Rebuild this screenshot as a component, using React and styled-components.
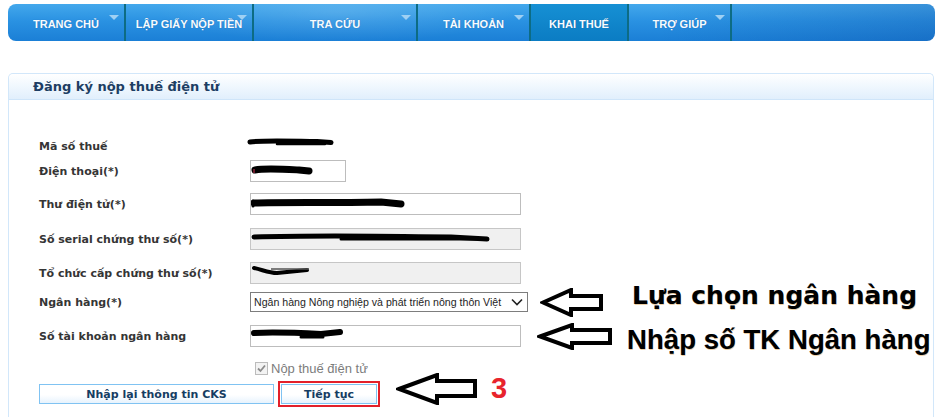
import React from 'react';
import styled, { createGlobalStyle } from 'styled-components';

const Global = createGlobalStyle`
  html, body { margin: 0; padding: 0; background: #fff; }
  body { font-family: "DejaVu Sans", Verdana, sans-serif; }
`

const Page = styled.div`
  width: 942px;
  height: 417px;
  overflow: hidden;
  padding-top: 4px;
  box-sizing: border-box;
`

const NavBar = styled.nav`
  display: flex;
  height: 37px;
  margin: 0 7px 0 8px;
  border-radius: 8px;
  overflow: hidden;
  background:
    radial-gradient(ellipse 180px 30px at 330px 8px, rgba(255,255,255,0.14), transparent),
    linear-gradient(90deg, rgba(255,255,255,0) 70%, rgba(0,30,120,0.16) 100%),
    linear-gradient(180deg, #43a8ec 0%, #2a92e2 45%, #1b7fd6 100%);
`

const NavItem = styled.div`
  position: relative;
  box-sizing: border-box;
  width: ${({ $w }) => $w}px;
  display: flex;
  align-items: center;
  justify-content: center;
  padding-top: 2px;
  border-right: 2px solid #0d6c84;
  color: #f7fbff;
  font: bold 11px "Liberation Sans", Arial, sans-serif;
  white-space: nowrap;
  text-shadow: 0 0 1px rgba(0, 40, 90, 0.35);
  background: ${({ $active }) => $active
    ? 'linear-gradient(180deg, #1690d4 0%, #0b7cc3 100%)'
    : 'transparent'};
`

const Caret = styled.span`
  position: absolute;
  top: 11px;
  right: 5px;
  width: 0;
  height: 0;
  border-left: 5px solid transparent;
  border-right: 5px solid transparent;
  border-top: 5px solid #9fd0f3;
`

const Panel = styled.section`
  margin: 32px 8px 0 8px;
  border: 1px solid #d2e7fa;
  border-bottom: none;
  border-radius: 5px 5px 0 0;
  height: 360px;
`

const PanelHead = styled.div`
  height: 25px;
  border-bottom: 1px solid #cfe5f9;
  border-radius: 5px 5px 0 0;
  background: linear-gradient(180deg, #ffffff 0%, #f1f8fe 45%, #e1effc 100%);
  display: flex;
  align-items: center;
  padding-left: 24px;
  color: #1d3e63;
  font: bold 13px "DejaVu Sans", Verdana, sans-serif;
`

const Form = styled.div`
  padding: 36px 0 0 30px;
`

const Row = styled.div`
  display: flex;
  align-items: center;
  height: ${({ $h }) => $h}px;
  margin-top: ${({ $mt }) => $mt || 0}px;
`

const Label = styled.div`
  width: 211px;
  flex: none;
  color: #353535;
  font: bold 11px "DejaVu Sans", Verdana, sans-serif;
  white-space: nowrap;
`

const Box = styled.div`
  box-sizing: border-box;
  width: ${({ $w }) => $w || 271}px;
  height: 22px;
  border: 1px solid ${({ $gray }) => $gray ? '#c6c6c6' : '#bdbdbd'};
  background: ${({ $gray }) => $gray ? '#f0f0f0' : '#fff'};
  flex: none;
`

const Scribble = styled.svg`
  display: block;
  width: 100%;
  height: 100%;
`

const SelectBox = styled.div`
  box-sizing: border-box;
  width: 278px;
  height: 20px;
  border: 1px solid #7d7d7d;
  background: #fff;
  display: flex;
  align-items: center;
  justify-content: space-between;
  padding: 0 4px 0 3px;
  color: #1e1e1e;
  font: 10.6px "Liberation Sans", Arial, sans-serif;
  white-space: nowrap;
  flex: none;
`

const Arrow = styled.svg`
  flex: none;
  margin-left: ${({ $ml }) => $ml}px;
  margin-bottom: ${({ $mb }) => $mb || 0}px;
`

const Note = styled.div`
  flex: none;
  margin-left: ${({ $ml }) => $ml}px;
  margin-top: ${({ $mt }) => $mt || 0}px;
  margin-bottom: ${({ $mb }) => $mb || 0}px;
  color: #000;
  font-family: ${({ $dv }) => $dv ? '"DejaVu Sans", Verdana, sans-serif' : '"Liberation Sans", Arial, sans-serif'};
  font-weight: bold;
  font-size: ${({ $size }) => $size}px;
  line-height: 1.15;
  white-space: nowrap;
  text-shadow: 0.5px 0.5px 0 rgba(200, 120, 0, 0.35), -0.5px 0 0 rgba(0, 90, 200, 0.3);
`

const CheckWrap = styled.label`
  display: flex;
  align-items: center;
  margin-left: 216px;
  gap: 3px;
  color: #7c7c7c;
  font: 13px "Liberation Sans", Arial, sans-serif;
`

const CheckSquare = styled.span`
  box-sizing: border-box;
  width: 13px;
  height: 13px;
  border: 1px solid #bcbcbc;
  background: #f3f3f3;
  display: flex;
  align-items: center;
  justify-content: center;
`

const Button = styled.button`
  box-sizing: border-box;
  width: ${({ $w }) => $w}px;
  height: 20px;
  padding: 0;
  border: 1px solid #80c3f2;
  background: linear-gradient(180deg, #ffffff 0%, #ffffff 55%, #e7f3fd 100%);
  color: #163d63;
  font: bold 11px "DejaVu Sans", Verdana, sans-serif;
  cursor: pointer;
  flex: none;
`

const Highlight = styled.div`
  box-sizing: border-box;
  width: 102px;
  height: 26px;
  margin-left: 4px;
  border: 2px solid #e3202a;
  padding: 1px;
  display: flex;
  justify-content: center;
  flex: none;
`

const Step = styled.div`
  flex: none;
  margin-left: 13px;
  margin-bottom: 10px;
  color: #e8242c;
  font: bold 29px "Liberation Sans", Arial, sans-serif;
  line-height: 1.15;
`

const menu = [
  { label: 'TRANG CHỦ', w: 118, caret: true },
  { label: 'LẬP GIẤY NỘP TIỀN', w: 128, caret: true },
  { label: 'TRA CỨU', w: 164, caret: true },
  { label: 'TÀI KHOẢN', w: 113, caret: true },
  { label: 'KHAI THUẾ', w: 98, active: true },
  { label: 'TRỢ GIÚP', w: 103, caret: true },
]

const ink = { fill: 'none', stroke: '#000', strokeLinecap: 'round', strokeLinejoin: 'round' }

const HollowArrow = ({ w, h, head, top, bottom, ml, mb }) => (
  <Arrow $ml={ml} $mb={mb} width={w} height={h} viewBox={`0 0 ${w} ${h}`}>
    <polygon
      points={`3,${h / 2} ${head},2 ${head},${top} ${w - 3},${top} ${w - 3},${bottom} ${head},${bottom} ${head},${h - 2}`}
      fill="none" stroke="#000" strokeWidth="4" strokeLinejoin="miter"
    />
  </Arrow>
)

const App = () => {
  return (
    <Page>
      <Global />
      <NavBar>
        {menu.map(m => (
          <NavItem key={m.label} $w={m.w} $active={m.active}>
            {m.label}
            {m.caret && <Caret />}
          </NavItem>
        ))}
      </NavBar>

      <Panel>
        <PanelHead>Đăng ký nộp thuế điện tử</PanelHead>
        <Form>
          <Row $h={20}>
            <Label>Mã số thuế</Label>
            <svg width="90" height="20" style={{ marginLeft: -3 }}>
              <path d="M3 6 C15 4 40 5 70 5.5 L84 6.5" {...ink} strokeWidth="5" />
              <path d="M30 8 L78 8" {...ink} strokeWidth="2.5" />
            </svg>
          </Row>

          <Row $h={22} $mt={4}>
            <Label>Điện thoại(*)</Label>
            <Box $w={96}>
              <Scribble>
                <path d="M4 9 C14 7 30 8 48 9 L58 10" {...ink} strokeWidth="7" />
                <path d="M3 12 L3 8" stroke="#6b1a2a" strokeWidth="2" />
              </Scribble>
            </Box>
          </Row>

          <Row $h={22} $mt={11}>
            <Label>Thư điện tử(*)</Label>
            <Box>
              <Scribble>
                <path d="M3 9 C30 8 80 9 130 8 L150 10" {...ink} strokeWidth="7" />
                <path d="M2 7 L2 12" {...ink} strokeWidth="3" />
              </Scribble>
            </Box>
          </Row>

          <Row $h={22} $mt={13}>
            <Label>Số serial chứng thư số(*)</Label>
            <Box $gray>
              <Scribble>
                <path d="M3 8 C60 6 140 7 200 8 L236 10" {...ink} strokeWidth="5" />
                <path d="M90 10 L230 10" {...ink} strokeWidth="3" />
              </Scribble>
            </Box>
          </Row>

          <Row $h={22} $mt={12}>
            <Label>Tổ chức cấp chứng thư số(*)</Label>
            <Box $gray>
              <Scribble>
                <path d="M3 5 C12 7 18 10 26 10 L56 7" {...ink} strokeWidth="4" />
                <path d="M20 6 L58 6" stroke="#555" strokeWidth="1.5" />
              </Scribble>
            </Box>
          </Row>

          <Row $h={20} $mt={8}>
            <Label>Ngân hàng(*)</Label>
            <SelectBox>
              Ngân hàng Nông nghiệp và phát triển nông thôn Việt
              <svg width="12" height="8" viewBox="0 0 12 8">
                <path d="M1 1.5 L6 6.5 L11 1.5" fill="none" stroke="#222" strokeWidth="1.6" />
              </svg>
            </SelectBox>
            <HollowArrow w={64} h={29} head={31} top={8} bottom={21} ml={12} />
            <Note $dv $size={25} $ml={28} $mb={12}>Lựa chọn ngân hàng</Note>
          </Row>

          <Row $h={22} $mt={13}>
            <Label>Số tài khoản ngân hàng</Label>
            <Box>
              <Scribble>
                <path d="M3 7 C20 6 50 7 70 8 L89 6" {...ink} strokeWidth="6" />
                <path d="M50 11 L72 11" {...ink} strokeWidth="3" />
              </Scribble>
            </Box>
            <HollowArrow w={76} h={27} head={35} top={7} bottom={20} ml={16} />
            <Note $size={27.6} $ml={14} $mt={8}>Nhập số TK Ngân hàng</Note>
          </Row>

          <Row $h={15} $mt={14}>
            <CheckWrap>
              <CheckSquare>
                <svg width="9" height="9" viewBox="0 0 9 9">
                  <path d="M1 4.5 L3.5 7 L8 1.5" fill="none" stroke="#8c8c8c" strokeWidth="1.8" />
                </svg>
              </CheckSquare>
              Nộp thuế điện tử
            </CheckWrap>
          </Row>

          <Row $h={26} $mt={5}>
            <Button $w={235}>Nhập lại thông tin CKS</Button>
            <Highlight>
              <Button $w={96}>Tiếp tục</Button>
            </Highlight>
            <HollowArrow w={82} h={32} head={41} top={8} bottom={23} ml={16} mb={10} />
            <Step>3</Step>
          </Row>
        </Form>
      </Panel>
    </Page>
  );
}

export default App;
